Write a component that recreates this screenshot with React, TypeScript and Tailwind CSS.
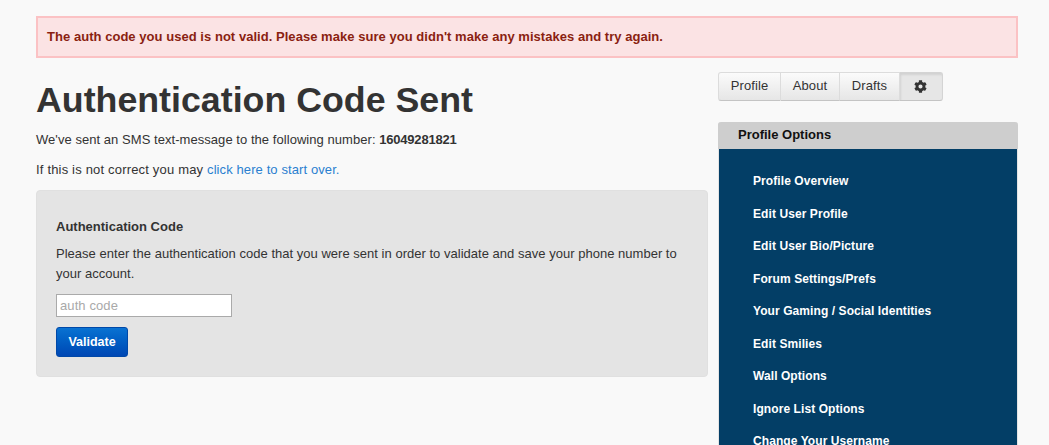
import React from 'react';
import { FaCog } from 'react-icons/fa';

const options = [
  'Profile Overview',
  'Edit User Profile',
  'Edit User Bio/Picture',
  'Forum Settings/Prefs',
  'Your Gaming / Social Identities',
  'Edit Smilies',
  'Wall Options',
  'Ignore List Options',
  'Change Your Username',
];

const tabs = ['Profile', 'About', 'Drafts'];

const App = () => {
  return (
    <div className="h-[445px] overflow-hidden bg-[#f9f9f9] px-[31px] pt-[16px] font-['Liberation_Sans',Arial,sans-serif] text-[13px] text-[#333333]">
      <div className="ml-[5px] h-[42px] w-[982px] border-2 border-[#fbc2c4] bg-[#fbe3e4] pl-[9px] pt-[9px] text-[13px] leading-[20px] font-bold tracking-[0.04px] text-[#8a1f11]">
        The auth code you used is not valid. Please make sure you didn't make any mistakes and try again.
      </div>

      <div className="mt-[14px] ml-[5px] flex w-[982px] justify-between">
        <div className="w-[672px]">
          <h1 className="mt-[4px] text-[35.75px] leading-[48px] font-bold text-[#333333]">Authentication Code Sent</h1>
          <p className="mt-[6px] leading-[20px] tracking-[0.05px]">
            We've sent an SMS text-message to the following number: <strong className="tracking-[-0.2px]">16049281821</strong>
          </p>
          <p className="mt-[10px] leading-[20px] tracking-[0.18px]">
            If this is not correct you may <a className="tracking-[0.1px] text-[#2a7fd0]">click here to start over.</a>
          </p>
          <div className="mt-[10px] h-[187px] rounded-[4px] border border-[#e0e0e0] bg-[#e4e4e4] px-[19px] pt-[26px]">
            <div className="leading-[20px] font-bold">Authentication Code</div>
            <p className="mt-[7px] leading-[20px] tracking-[0.02px]">
              Please enter the authentication code that you were sent in order to validate and save your phone number to your account.
            </p>
            <input
              placeholder="auth code"
              className="mt-[10px] block h-[23px] w-[176px] border border-[#aaaaaa] bg-white px-[3px] text-[13px] tracking-[0.1px] placeholder:text-[#a9a9a9]"
            />
            <button className="mt-[10px] block h-[30px] w-[72px] rounded-[3px] border border-[#0048a8] bg-gradient-to-b from-[#0a72d2] to-[#0047b4] text-[12.5px] font-bold text-white">
              Validate
            </button>
          </div>
        </div>

        <div className="w-[300px] shrink-0">
          <div className="flex h-[29px]">
            {tabs.map((t, i) => (
              <div
                key={t}
                className={`flex items-center justify-center border border-[#dcdcdc] border-b-[#c4c4c4] bg-gradient-to-b from-[#fbfbfb] to-[#e6e6e6] pb-[2px] text-[13px] tracking-[0.1px] ${
                  i === 0 ? 'w-[63px] rounded-l-[3px]' : i === 1 ? 'w-[59px] border-l-0' : 'w-[60px] border-l-0'
                }`}
              >
                {t}
              </div>
            ))}
            <div className="flex w-[43px] items-center justify-center rounded-r-[3px] border border-l-0 border-[#d4d4d4] border-b-[#c4c4c4] bg-[#e6e6e6] shadow-[inset_1px_2px_2px_#d2d2d2]">
              <FaCog className="-ml-[2px] text-[13px] text-[#333333]" />
            </div>
          </div>

          <div className="mt-[21px] rounded-t-[3px] border-x border-[#e4e4e4]">
            <div className="-mx-[1px] h-[27px] rounded-t-[3px] bg-[#cecece] pl-[20px] text-[13px] leading-[25px] font-bold text-[#111111]">
              Profile Options
            </div>
            <ul className="bg-[#033e66] pt-[16px] pl-[34px] pb-[30px]">
              {options.map((o) => (
                <li key={o} className="h-[32.5px] text-[12px] leading-[32px] font-bold tracking-[0.08px] text-white">
                  {o}
                </li>
              ))}
            </ul>
          </div>
        </div>
      </div>
    </div>
  );
};

export default App;
